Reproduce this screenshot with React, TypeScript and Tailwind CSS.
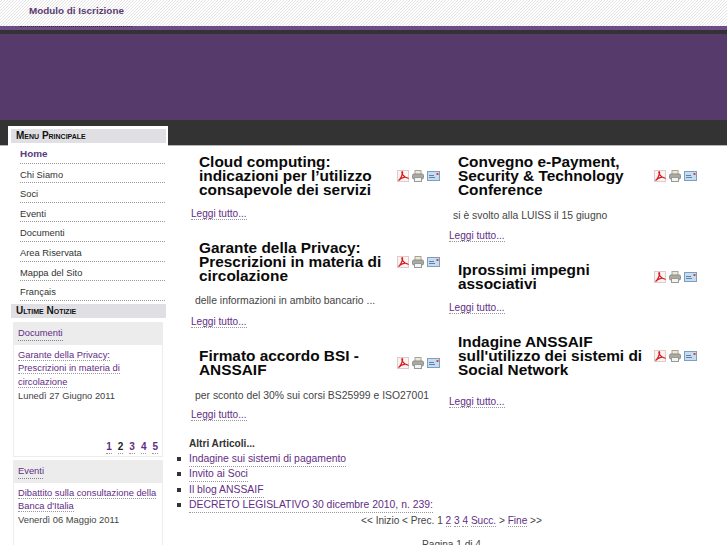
import React from "react";

const Icons = () => (
  <div className="flex items-center gap-[3px] shrink-0">
    <svg width="12" height="12" viewBox="0 0 12 12" fill="none">
      <rect x="0.5" y="0.5" width="11" height="11" fill="#f8f4f4" stroke="#e3c9c9" />
      <path d="M1.5 10.5C3 9.5 4.5 7 5.5 3.5C5.8 2 5.2 1.2 4.9 2C4.6 3.5 6.5 7 10.5 8C9.5 7 5 6.5 1.5 10.5Z" stroke="#d8191c" strokeWidth="1.2" />
    </svg>
    <svg width="12" height="12" viewBox="0 0 12 12" fill="none">
      <rect x="3" y="0.5" width="6" height="4" fill="#efe8d4" stroke="#a9a592" />
      <rect x="0.5" y="4" width="11" height="5" rx="1.5" fill="#a9aaa6" stroke="#8a8b88" />
      <rect x="2.5" y="7.5" width="7" height="4" fill="#f3f3ef" stroke="#9a9a94" />
    </svg>
    <svg width="13" height="10" viewBox="0 0 13 10" fill="none">
      <rect x="0.5" y="0.5" width="12" height="9" fill="#c6dcf0" stroke="#7f9dbc" />
      <rect x="2" y="4" width="5" height="1" fill="#5b83ad" />
      <rect x="2" y="6" width="6" height="1" fill="#5b83ad" />
      <rect x="9.5" y="2" width="2" height="2" fill="#d8423c" />
    </svg>
  </div>
);

const A = ({ children, className = "" }: { children: React.ReactNode; className?: string }) => (
  <a className={`text-[#5f2d85] border-b border-dotted border-[#999999] ${className}`}>{children}</a>
);

const Article = ({ title, text, gapTop, readTop, titlePl, textCls }: { title: string[]; text?: string; gapTop: string; readTop: string; titlePl: string; textCls?: string }) => (
  <article className={gapTop}>
    <div className="flex items-center justify-between">
      <h2 className={`${titlePl} text-[15.4px] leading-[14px] font-bold text-[#0a0a0a]`}>
        {title.map((t) => (
          <div key={t} className="whitespace-nowrap">{t}</div>
        ))}
      </h2>
      <Icons />
    </div>
    {text && <p className={`${textCls} text-[10.4px] text-[#444] leading-[14px] whitespace-nowrap`}>{text}</p>}
    <div className={`${readTop} leading-[14px] text-[10.1px]`}><A>Leggi tutto...</A></div>
  </article>
);

const menu = ["Chi Siamo", "Soci", "Eventi", "Documenti", "Area Riservata", "Mappa del Sito", "Français"];

const Card = ({ label, labelW, children, h }: { label: string; labelW: string; children: React.ReactNode; h: string }) => (
  <div className={`ml-[2px] mr-[3px] bg-white border border-[#ececec] ${h}`}>
    <div className="bg-[#ececec] h-[22px] pl-[4px] pt-[3px]">
      <span className={`block text-[#5f2d85] leading-[14px] border-b border-dotted border-[#8a7a9a] ${labelW}`}>{label}</span>
    </div>
    <div className="pl-[4px] pt-[4px]">{children}</div>
  </div>
);

const items = ["Indagine sui sistemi di pagamento", "Invito ai Soci", "Il blog ANSSAIF", "DECRETO LEGISLATIVO 30 dicembre 2010, n. 239:"];

export default function App() {
  return (
    <div className="w-[727px] h-[545px] overflow-hidden bg-white text-[11px] font-['Liberation_Sans',Arial,sans-serif]">
      <div className="h-[26px] pl-[29px] pt-[2px] bg-[repeating-linear-gradient(135deg,#ffffff_0px,#ffffff_1.4px,#e2e2e2_1.4px,#e2e2e2_2.12px)]">
        <span className="font-bold text-[9.9px] text-[#5b3a73] leading-[14px]">Modulo di Iscrizione</span>
      </div>
      <div className="h-[4px] bg-[#6e4a88]">
        <div className="ml-[20px] w-[112px] border-t border-dotted border-[#333]" />
      </div>
      <div className="h-[4px] bg-[#333333]" />
      <div className="h-[86px] bg-[#563a6b]" />
      <div className="h-[26px] bg-[#333333] border-b border-[#b5b5b5]" />
      <div className="flex items-start">
        <aside className="relative ml-[8px] -mt-[20px] w-[160px] shrink-0 bg-white border-t-[3px] border-l-[3px] border-r-[2px] border-white text-[9.35px]">
          <div className="h-[14px] bg-[#e0e0e4] pl-[5px] text-[10px] leading-[14px] font-bold text-[#111] [font-variant:small-caps]">Menu Principale</div>
          <ul className="pl-[9px] pr-[1px] pt-[1px]">
            <li className="h-[19.6px] border-b border-dotted border-[#999] pt-[3px] font-bold text-[#5b3a83] text-[9.9px] leading-[14px]">Home</li>
            {menu.map((m) => (
              <li key={m} className="h-[19.6px] border-b border-dotted border-[#999] pt-[4px] text-[#333] leading-[14px]">{m}</li>
            ))}
          </ul>
          <div className="mt-[3px] h-[14px] bg-[#e0e0e4] pl-[5px] text-[10px] leading-[14px] font-bold text-[#111] [font-variant:small-caps]">Ultime Notizie</div>
          <div className="pt-[4px]">
            <Card label="Documenti" labelW="w-[45px]" h="h-[135px]">
              <div className="leading-[13.7px]">
                <A>Garante della Privacy:</A><br />
                <A>Prescrizioni in materia di</A><br />
                <A>circolazione</A><br />
                <span className="text-[#444]">Lunedì 27 Giugno 2011</span>
              </div>
              <div className="mt-[37px] flex justify-end gap-[6px] pr-[4px] text-[10px] font-bold text-[#4b2c83] leading-[12px]">
                <A>1</A><span className="text-[#222] border-b border-dotted border-[#999]">2</span><A>3</A><A>4</A><A>5</A>
              </div>
            </Card>
            <div className="h-[3px]" />
            <Card label="Eventi" labelW="w-[25px]" h="h-[120px]">
              <div className="leading-[13.7px] whitespace-nowrap">
                <A>Dibattito sulla consultazione della</A><br />
                <A>Banca d'Italia</A><br />
                <span className="text-[#444]">Venerdì 06 Maggio 2011</span>
              </div>
            </Card>
          </div>
        </aside>
        <main className="min-w-0 flex-1 pl-[21px] pt-[9px]">
          <div className="flex">
            <div className="w-[251px] shrink-0">
              <Article gapTop="" titlePl="pl-[10px]" title={["Cloud computing:", "indicazioni per l’utilizzo", "consapevole dei servizi"]} readTop="mt-[10px] pl-[2px]" />
              <Article gapTop="mt-[20px]" titlePl="pl-[10px]" textCls="pl-[6px] mt-[11px]" title={["Garante della Privacy:", "Prescrizioni in materia di", "circolazione"]} text="delle informazioni in ambito bancario ..." readTop="mt-[7px] pl-[2px]" />
              <Article gapTop="mt-[20px]" titlePl="pl-[10px]" textCls="pl-[6px] mt-[12px]" title={["Firmato accordo BSI -", "ANSSAIF"]} text="per sconto del 30% sui corsi BS25999 e ISO27001" readTop="mt-[5px] pl-[2px]" />
            </div>
            <div className="w-[248px] ml-[9px] shrink-0">
              <Article gapTop="" titlePl="pl-[9px]" textCls="pl-[4px] mt-[12px]" title={["Convegno e-Payment,", "Security & Technology", "Conference"]} text="si è svolto alla LUISS il 15 giugno" readTop="mt-[6px]" />
              <Article gapTop="mt-[20px]" titlePl="pl-[9px]" title={["Iprossimi impegni", "associativi"]} readTop="mt-[10px]" />
              <Article gapTop="mt-[20px]" titlePl="pl-[9px]" title={["Indagine ANSSAIF", "sull'utilizzo dei sistemi di", "Social Network"]} readTop="mt-[18px]" />
            </div>
          </div>
          <div className="mt-[15px] text-[10.4px]">
            <div className="font-bold text-[10.1px] text-[#333] leading-[14px]">Altri Articoli...</div>
            <ul className="mt-[1px]">
              {items.map((t) => (
                <li key={t} className="-ml-[12px] h-[15.3px] flex items-start">
                  <span className="w-[4px] h-[4px] bg-[#333] mr-[8px] mt-[5px] shrink-0" />
                  <A className="leading-[14px]">{t}</A>
                </li>
              ))}
            </ul>
            <div className="text-center text-[10.1px] text-[#444] leading-[15px] w-[525px]">
              &lt;&lt; Inizio &lt; Prec. 1 <A>2</A> <A>3</A> <A>4</A> <A>Succ.</A> &gt; <A>Fine</A> &gt;&gt;
            </div>
            <div className="mt-[9px] text-center text-[10.1px] text-[#444] leading-[15px] w-[525px]">Pagina 1 di 4</div>
          </div>
        </main>
      </div>
    </div>
  );
}
